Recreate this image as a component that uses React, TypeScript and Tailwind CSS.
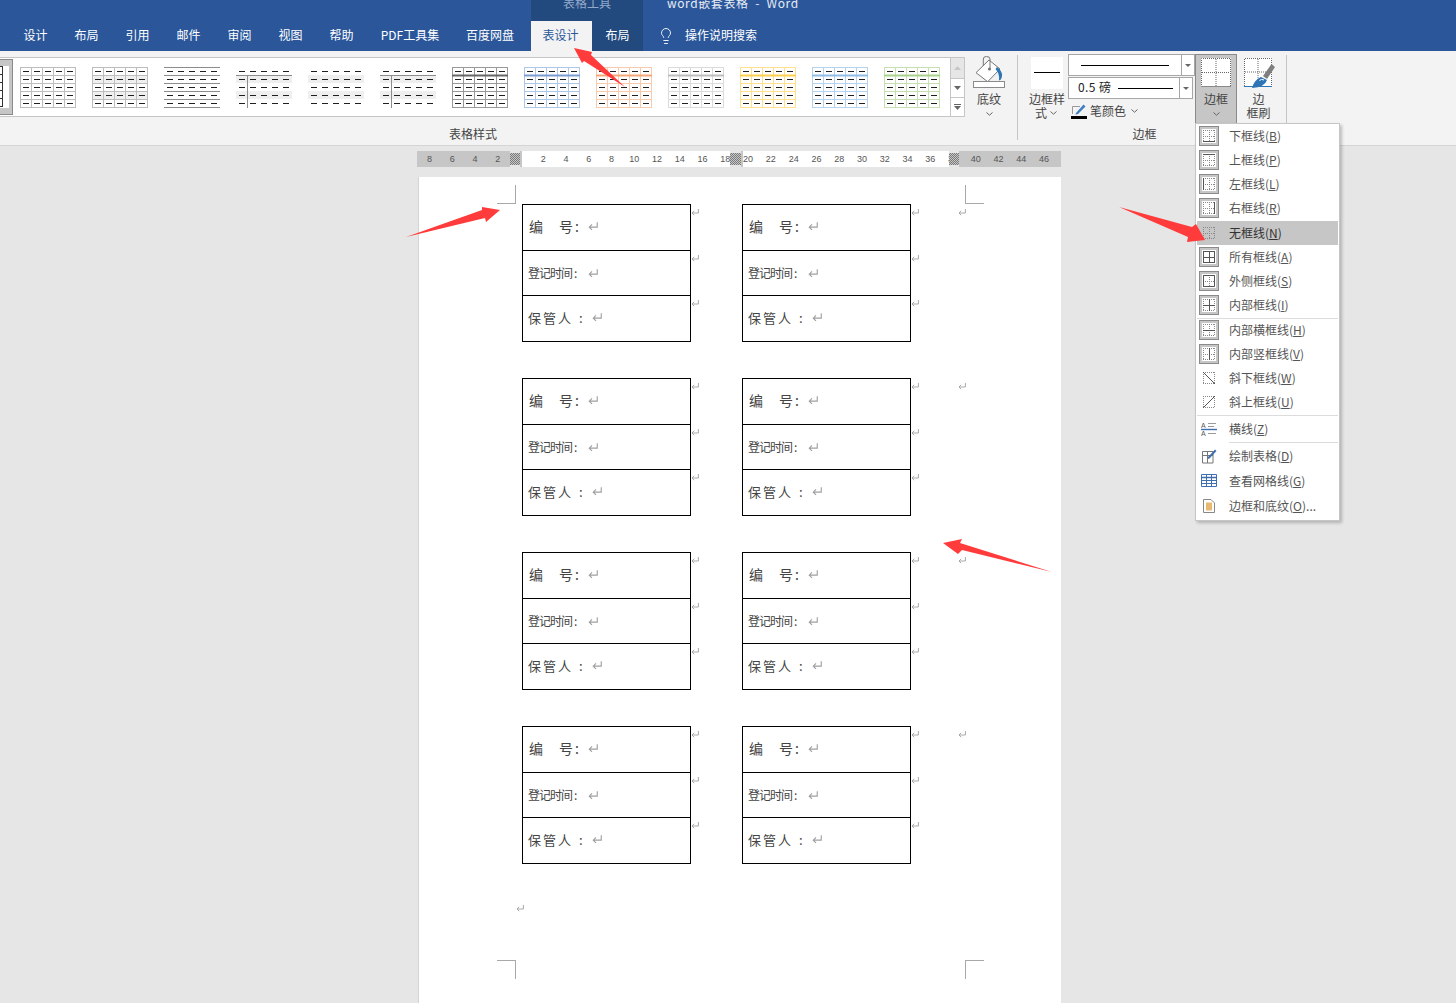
import React from "react";
import { Lightbulb } from "lucide-react";

const tabs = [
  { label: "设计", w: "w-[51px]" },
  { label: "布局", w: "w-[51px]" },
  { label: "引用", w: "w-[51px]" },
  { label: "邮件", w: "w-[51px]" },
  { label: "审阅", w: "w-[51px]" },
  { label: "视图", w: "w-[51px]" },
  { label: "帮助", w: "w-[51px]" },
  { label: "PDF工具集", w: "w-[86px]" },
  { label: "百度网盘", w: "w-[74px]" },
];

type ThumbProps = {
  line: string;
  head?: string;
  grid?: boolean;
  rules?: boolean;
  bands?: boolean;
  side?: boolean;
  topRule?: boolean;
};

const thumbs: ThumbProps[] = [
  { line: "#bdbdbd", grid: true },
  { line: "#bdbdbd", grid: true, bands: true },
  { line: "#8c8c8c", rules: true },
  { line: "#8c8c8c", side: true, bands: true, topRule: true },
  { line: "#8c8c8c", bands: true },
  { line: "#8c8c8c", side: true, bands: true, topRule: true },
  { line: "#999999", head: "#666666", grid: true },
  { line: "#aec6e8", head: "#7c9ccf", grid: true },
  { line: "#f8cbad", head: "#f4a877", grid: true },
  { line: "#dbdbdb", head: "#bdbdbd", grid: true },
  { line: "#ffe08f", head: "#ffcf4d", grid: true },
  { line: "#b4d3ef", head: "#8fbbe5", grid: true },
  { line: "#c6e0b4", head: "#a9d18e", grid: true },
];

function Thumb({ line, head, grid, rules, bands, side, topRule }: ThumbProps) {
  const xs = [0, 11, 22, 33, 44];
  const ys = [0, 8, 16, 24, 32];
  return (
    <svg width="56" height="41" className="shrink-0">
      {bands && <rect x="0" y="8" width="56" height="8" fill="#efefef" />}
      {bands && <rect x="0" y="24" width="56" height="8" fill="#efefef" />}
      {grid &&
        [0, 11, 22, 33, 44, 55].map((x) => (
          <line key={x} x1={x + 0.5} x2={x + 0.5} y1="0" y2="41" stroke={line} />
        ))}
      {(grid || rules) &&
        [0, 8, 16, 24, 32, 40].map((y) => (
          <line key={y} x1="0" x2="56" y1={y + 0.5} y2={y + 0.5} stroke={line} />
        ))}
      {head && <rect x="0" y="7.5" width="56" height="2" fill={head} />}
      {topRule && <line x1="0" x2="56" y1="8.5" y2="8.5" stroke={line} />}
      {side && <line x1="11.5" x2="11.5" y1="8" y2="41" stroke={line} />}
      {xs.map((x) =>
        ys.map((y) => (
          <rect key={`${x}-${y}`} x={x + 3} y={y + 4} width="6" height="1" fill="#1f1f1f" />
        ))
      )}
    </svg>
  );
}

function Chevron() {
  return (
    <svg width="7" height="4" viewBox="0 0 7 4" className="shrink-0">
      <path d="M0.5 0.5 L3.5 3.2 L6.5 0.5" fill="none" stroke="#666666" />
    </svg>
  );
}

function ReturnMark({ size = 7 }: { size?: number }) {
  return (
    <svg width={size + 1} height={size} viewBox="0 0 8 7" className="shrink-0">
      <path
        d="M7.4 0 V4 H1 M3.2 1.8 L1 4 L3.2 6.2"
        fill="none"
        stroke="#a0a0a0"
        strokeWidth="0.9"
      />
    </svg>
  );
}

// small dotted table used by the border menu
function BorderIcon({
  lines,
  boxed = true,
  outline = false,
}: {
  lines: string;
  boxed?: boolean;
  outline?: boolean;
}) {
  const dots = outline
    ? "M4 4.5 H16 M4 15.5 H16 M4.5 4 V16 M15.5 4 V16"
    : "M4 4.5 H16 M4 10.5 H16 M4 15.5 H16 M4.5 4 V16 M10.5 4 V16 M15.5 4 V16";
  return (
    <svg width="20" height="20" viewBox="0 0 20 20" className="shrink-0">
      {boxed && <rect x="0.5" y="0.5" width="19" height="19" fill="#c6c6c6" stroke="#8a8a8a" />}
      {boxed && <rect x="3" y="3" width="14" height="14" fill="#ffffff" />}
      <path d={dots} stroke="#888888" strokeDasharray="1 1" fill="none" />
      <path d={lines} stroke="#555555" fill="none" />
    </svg>
  );
}

const menuTop = [
  { label: "下框线", key: "B", lines: "M4 15.5 H16" },
  { label: "上框线", key: "P", lines: "M4 4.5 H16" },
  { label: "左框线", key: "L", lines: "M4.5 4 V16" },
  { label: "右框线", key: "R", lines: "M15.5 4 V16" },
];

const menuMiddle = [
  { label: "所有框线", key: "A", lines: "M4 4.5 H16 M4 10.5 H16 M4 15.5 H16 M4.5 4 V16 M10.5 4 V16 M15.5 4 V16" },
  { label: "外侧框线", key: "S", lines: "M4.5 4.5 H15.5 V15.5 H4.5 Z" },
  { label: "内部框线", key: "I", lines: "M4 10.5 H16 M10.5 4 V16" },
];

const menuInner = [
  { label: "内部横框线", key: "H", lines: "M4 10.5 H16", boxed: true },
  { label: "内部竖框线", key: "V", lines: "M10.5 4 V16", boxed: true },
  { label: "斜下框线", key: "W", lines: "M4 4 L16 16", boxed: false },
  { label: "斜上框线", key: "U", lines: "M4 16 L16 4", boxed: false },
];

function MenuItem({
  icon,
  label,
  hotkey,
  tail,
  active,
  tall,
}: {
  icon: React.ReactNode;
  label: string;
  hotkey: string;
  tail?: string;
  active?: boolean;
  tall?: boolean;
}) {
  return (
    <div
      className={`flex items-center text-[12px] ${tall ? "h-[25px]" : "h-[24px]"} ${
        active ? "mx-px bg-[#c6c6c6] pl-[2px] text-[#333333]" : "pl-[3px] text-[#555555]"
      }`}
    >
      <div className="flex w-[20px] justify-center">{icon}</div>
      <span className="ml-[10px] whitespace-pre">
        {label}(<span className="underline">{hotkey}</span>){tail}
      </span>
    </div>
  );
}

function MenuSep({ inset }: { inset?: boolean }) {
  return <div className={`mr-[1px] mt-px -mb-px h-px bg-[#dcdcdc] ${inset ? "ml-[33px]" : "ml-[1px]"}`} />;
}

function BorderMenu() {
  return (
    <div className="absolute left-[1195px] top-[123px] flex h-[398px] w-[145px] flex-col border border-[#c6c6c6] bg-white shadow-[2px_2px_3px_rgba(0,0,0,0.22)]">
      {menuTop.map((m) => (
        <MenuItem key={m.key} label={m.label} hotkey={m.key} icon={<BorderIcon lines={m.lines} />} />
      ))}
      <div className="mt-px">
        <MenuItem active label="无框线" hotkey="N" icon={<BorderIcon lines="" boxed={false} />} />
      </div>
      {menuMiddle.map((m) => (
        <MenuItem key={m.key} label={m.label} hotkey={m.key} icon={<BorderIcon lines={m.lines} />} />
      ))}
      <MenuSep />
      {menuInner.map((m) => (
        <MenuItem
          key={m.key}
          label={m.label}
          hotkey={m.key}
          icon={<BorderIcon lines={m.lines} boxed={m.boxed} outline={!m.boxed} />}
        />
      ))}
      <MenuSep />
      <div className="mt-px">
        <MenuItem
          tall
          label="横线"
          hotkey="Z"
          icon={
            <svg width="16" height="16" viewBox="0 0 16 16">
              <text x="0" y="6.5" fontSize="7" fill="#555555" fontFamily="Liberation Sans">A</text>
              <text x="0" y="15" fontSize="7" fill="#555555" fontFamily="Liberation Sans">A</text>
              <path d="M7 2.5 H15 M7 5.5 H13 M7 12.5 H15" stroke="#999999" fill="none" />
              <path d="M0 8.5 H16" stroke="#3f6fb0" strokeWidth="1.4" fill="none" />
            </svg>
          }
        />
      </div>
      <MenuSep inset />
      <div className="mt-px">
        <MenuItem
          tall
          label="绘制表格"
          hotkey="D"
          icon={
            <svg width="16" height="16" viewBox="0 0 16 16">
              <path d="M1.5 3.5 H12 V15 H1.5 Z M1.5 7.5 H12 M6.5 3.5 V15" stroke="#777777" fill="none" />
              <path d="M7 9 L14 1.5 L15.5 3 L8.5 10.5 L6.5 11 Z" fill="#3f6fb0" />
            </svg>
          }
        />
      </div>
      <MenuItem
        tall
        label="查看网格线"
        hotkey="G"
        icon={
          <svg width="16" height="13" viewBox="0 0 16 13">
            <path d="M0.5 0.5 H15.5 V12.5 H0.5 Z" stroke="#3f6fb0" fill="#ffffff" />
            <path d="M0.5 3.5 H15.5" stroke="#3f6fb0" strokeWidth="1.5" />
            <path d="M0.5 6.5 H15.5 M0.5 9.5 H15.5 M5.5 1 V12.5 M10.5 1 V12.5" stroke="#3f6fb0" />
          </svg>
        }
      />
      <MenuItem
        tall
        label="边框和底纹"
        hotkey="O"
        tail="..."
        icon={
          <svg width="12" height="14" viewBox="0 0 12 14">
            <path d="M0.5 0.5 H8 L11.5 4 V13.5 H0.5 Z" stroke="#888888" fill="#ffffff" />
            <rect x="3" y="3.5" width="6" height="8" fill="#e8b96f" />
          </svg>
        }
      />
    </div>
  );
}

function Cell({ className, children }: { className: string; children: React.ReactNode }) {
  return <div className={`flex items-center pl-[5px] text-[#444444] ${className}`}>{children}</div>;
}

function LabelTable() {
  return (
    <div className="flex">
      <div className="flex h-[138px] w-[169px] shrink-0 flex-col border border-black">
        <Cell className="h-[46px] border-b border-black pb-[2px] text-[14px]">
          <span className="ml-px">编</span>
          <span className="ml-[16px]">号</span>
          <span className="ml-[2px] mr-[9px]">:</span>
          <ReturnMark size={9} />
        </Cell>
        <Cell className="h-[45px] border-b border-black text-[12px]">
          <span className="tracking-[-1px]">登记时间</span>
          <span className="ml-[2px] mr-[11px]">:</span>
          <ReturnMark size={9} />
        </Cell>
        <Cell className="flex-1 pb-[2px] text-[13px]">
          <span className="tracking-[2px]">保管人</span>
          <span className="ml-[6px] mr-[9px]">:</span>
          <ReturnMark size={9} />
        </Cell>
      </div>
      <div className="flex w-[51px] flex-col pt-[5px]">
        <div className="h-[46px]"><ReturnMark /></div>
        <div className="h-[45px]"><ReturnMark /></div>
        <div><ReturnMark /></div>
      </div>
    </div>
  );
}

const rulerNumbers = [
  "8", "6", "4", "2", "", "2", "4", "6", "8", "10", "12", "14", "16", "18", "20", "22", "24", "26",
  "28", "30", "32", "34", "36", "38", "40", "42", "44", "46",
];

function RulerHatch({ className }: { className: string }) {
  return (
    <div
      className={`relative z-10 h-[12px] self-center bg-[repeating-conic-gradient(#7a7a7a_0_25%,#c6c6c6_0_50%)] bg-[length:2px_2px] ${className}`}
    />
  );
}

function Ruler() {
  return (
    <div className="relative ml-[417px] mt-[5px] h-[16px] w-[644px] shrink-0">
      <div className="flex h-full">
        <div className="w-[93px] bg-[#c6c6c6]" />
        <RulerHatch className="w-[10px]" />
        <div className="w-[2px] bg-[#c6c6c6]" />
        <div className="w-[208px] bg-white" />
        <RulerHatch className="w-[11px]" />
        <div className="w-[2px] bg-[#c6c6c6]" />
        <div className="w-[206px] bg-white" />
        <RulerHatch className="w-[10px]" />
        <div className="flex-1 bg-[#c6c6c6]" />
      </div>
      <div className="absolute inset-0 flex pl-[1px] font-['Liberation_Sans',sans-serif] text-[9px] leading-[16px] text-[#555555]">
        {rulerNumbers.map((n, i) => (
          <div key={i} className="w-[22.77px] shrink-0 text-center">
            {n}
          </div>
        ))}
      </div>
    </div>
  );
}

function ScrollCell({ className, children }: { className: string; children?: React.ReactNode }) {
  return <div className={`flex flex-col items-center justify-center gap-[1px] border-l border-r border-[#c6c6c6] ${className}`}>{children}</div>;
}

function Gallery() {
  return (
    <div className="flex h-[60px] w-[965px] shrink-0 border-y border-[#c6c6c6] bg-white">
      <div className="flex w-[950px] items-center">
        <div className="h-[56px] w-[13px] shrink-0 border border-l-0 border-[#8a8a8a] bg-[#c6c6c6] py-[6px] pr-[3px]">
          <div className="h-full w-[9px] overflow-hidden bg-white">
            <div className="-ml-[53px]">
              <Thumb line="#333333" grid />
            </div>
          </div>
        </div>
        <div className="ml-[7px] flex gap-[16px]">
          {thumbs.map((t, i) => (
            <Thumb key={i} {...t} />
          ))}
        </div>
      </div>
      <div className="flex w-[15px] flex-col">
        <ScrollCell className="h-[20px] bg-[#e6e6e6]">
          <svg width="7" height="4"><path d="M0 4 L3.5 0 L7 4 Z" fill="#c6c6c6" /></svg>
        </ScrollCell>
        <ScrollCell className="h-[19px] border-t">
          <svg width="7" height="4"><path d="M0 0 L3.5 4 L7 0 Z" fill="#666666" /></svg>
        </ScrollCell>
        <ScrollCell className="flex-1 border-t">
          <div className="h-px w-[7px] bg-[#666666]" />
          <svg width="7" height="4"><path d="M0 0 L3.5 4 L7 0 Z" fill="#666666" /></svg>
        </ScrollCell>
      </div>
    </div>
  );
}

function Ribbon() {
  return (
    <div className="flex h-[95px] shrink-0 items-start border-b border-[#d4d4d4] bg-[#f3f3f3] text-[12px] leading-[14px] text-[#444444]">
      {/* table styles */}
      <div className="flex w-[1017px] shrink-0 flex-col">
        <div className="flex h-[76px] pt-[6px]">
          <Gallery />
          <div className="-mt-[3px] flex w-[48px] flex-col items-center">
            <svg width="40" height="40" viewBox="0 0 40 40">
              <path d="M7 18.7 L20 6 L31 15 L18.7 27.7 Z" fill="#ffffff" stroke="#777777" />
              <path d="M14.3 12 V5 Q14.3 2.5 17.5 2.5 Q21 2.5 21 5 V14" fill="none" stroke="#777777" />
              <circle cx="20.5" cy="15" r="1.6" fill="#777777" />
              <path d="M28 13 Q33.5 17 33 22 Q32.5 26 30 26.5 Q31 20 26.5 15 Z" fill="#2e75b6" />
              <rect x="4.5" y="27.5" width="31" height="6" fill="#ffffff" stroke="#8a8a8a" />
            </svg>
            <span className="-mt-[2px]">底纹</span>
            <div className="mt-[6px]"><Chevron /></div>
          </div>
        </div>
        <div className="w-[946px] text-center">表格样式</div>
      </div>
      <div className="mt-[4px] h-[85px] w-px shrink-0 bg-[#c6c6c6]" />

      {/* borders */}
      <div className="flex w-[268px] shrink-0 flex-col">
        <div className="flex h-[76px] pl-[11px]">
          <div className="flex w-[39px] shrink-0 flex-col pt-[6px]">
            <div className="ml-[2px] h-[32px] w-[32px] bg-white px-[3px] pt-[15px]">
              <div className="h-px w-full bg-black" />
            </div>
            <div className="mt-[3px] w-[38px]">边框样</div>
            <div className="flex items-center gap-[3px] pl-[6px]">
              式 <Chevron />
            </div>
          </div>
          <div className="flex w-[127px] shrink-0 flex-col pt-[3px]">
            <div className="flex h-[22px] border border-[#a6a6a6] bg-white">
              <div className="flex flex-1 items-center px-[12px]">
                <div className="h-px w-full bg-black" />
              </div>
              <div className="flex w-[13px] items-center justify-center border-l border-[#a6a6a6]">
                <svg width="6" height="3"><path d="M0 0 L3 3 L6 0 Z" fill="#666666" /></svg>
              </div>
            </div>
            <div className="mt-px flex h-[22px] w-[125px] border border-[#a6a6a6] bg-white">
              <div className="flex flex-1 items-center pl-[9px] pr-[6px] text-[#222222]">
                <span className="whitespace-pre pb-[2px] tracking-[0.4px]">0.5 磅</span>
                <div className="ml-[7px] h-px flex-1 bg-black" />
              </div>
              <div className="flex w-[13px] items-center justify-center border-l border-[#a6a6a6]">
                <svg width="6" height="3"><path d="M0 0 L3 3 L6 0 Z" fill="#666666" /></svg>
              </div>
            </div>
            <div className="mt-[4px] flex items-center pl-[3px]">
              <svg width="16" height="16" viewBox="0 0 16 16">
                <path d="M1.5 11 V3.5 H9" fill="none" stroke="#999999" />
                <path d="M5 10 L12.5 1.5 L14.5 3.5 L7 11 L4.5 11.8 Z" fill="#3f7fc4" />
                <rect x="0" y="13" width="16" height="3" fill="#000000" />
              </svg>
              <span className="ml-[3px]">笔颜色</span>
              <div className="ml-[5px]"><Chevron /></div>
            </div>
          </div>
          <div className="relative mt-[3px] flex h-[70px] w-[42px] shrink-0 flex-col items-center border border-[#8a8a8a] bg-[#c6c6c6]">
            <svg width="30" height="30" viewBox="0 0 30 30" className="mt-[3px]">
              <rect width="30" height="29" fill="#ffffff" />
              <path d="M0.5 29 V0.5 H29.5 V29 M15 1 V28 M1 14.5 H29" fill="none" stroke="#666666" strokeDasharray="1 1" />
              <path d="M0 28.5 H30" stroke="#8a8a8a" />
            </svg>
            <span className="mt-[4px]">边框</span>
            <div className="mt-[6px]"><Chevron /></div>
          </div>
          <div className="mt-[3px] flex w-[43px] shrink-0 flex-col items-center">
            <svg width="32" height="32" viewBox="0 0 32 32" className="mt-[3px]">
              <rect x="1" y="1" width="28" height="28" fill="#ffffff" />
              <path d="M1.5 29 V1.5 H28.5 V29 M15 2 V28 M2 15 H28" fill="none" stroke="#666666" strokeDasharray="1 1" />
              <path d="M1 29.5 H29" stroke="#2e75b6" />
              <path d="M28.5 7 L32 10 L24 22 L20 19 Z" fill="#7f7f7f" />
              <path d="M9 31 Q11 23 18 20 L24 23 Q22 30 9 31 Z" fill="#2e75b6" />
              <path d="M16.5 23.5 Q18.5 21.5 21 23" fill="none" stroke="#ffffff" />
            </svg>
            <span className="mt-[3px]">边</span>
            <span>框刷</span>
          </div>
        </div>
        <div className="w-[253px] text-center">边框</div>
      </div>
      <div className="mt-[4px] h-[85px] w-px shrink-0 bg-[#c6c6c6]" />
    </div>
  );
}

function CropMark({ className }: { className: string }) {
  return <div className={`absolute h-[19px] w-[19px] border-[#a8a8a8] ${className}`} />;
}

function Arrows() {
  return (
    <svg className="pointer-events-none absolute left-0 top-0 z-20" width="1456" height="1003">
      <g fill="#ff3b3b">
        <polygon points="574,48 592,52 591,55 625,87 584,61 582,63" />
        <polygon points="406,237 482,210 482,207 500,210 486,222 485,218" />
        <polygon points="1119,207 1192,227 1196,224 1205,240 1187,242 1188,237" />
        <polygon points="943,543 962,539 960,543 1052,572 962,550 958,554" />
      </g>
    </svg>
  );
}

export default function App() {
  return (
    <div className="relative flex h-[1003px] w-[1456px] flex-col overflow-hidden bg-[#e6e6e6] font-['Noto_Sans_CJK_SC','Liberation_Sans',sans-serif]">
      {/* title bar and tabs */}
      <div className="flex h-[51px] shrink-0 flex-col bg-[#2b579a] text-white">
        <div className="flex h-[21px] text-[12px] leading-[14px]">
          <div className="w-[531px]" />
          <div className="w-[112px] bg-[#234a7e] text-center text-[#93a9cc]">
            <div className="-mt-[4px]">表格工具</div>
          </div>
          <div className="-mt-[4px] ml-[24px] whitespace-pre text-[12px] tracking-[0.6px] text-[#e6ecf5]">
            word嵌套表格  -  Word
          </div>
        </div>
        <div className="flex h-[30px] text-[12px]">
          <div className="flex pl-[10px]">
            {tabs.map((t, i) => (
              <div key={i} className={`flex items-center justify-center pb-[3px] ${t.w}`}>
                {t.label}
              </div>
            ))}
          </div>
          <div className="ml-[4px] flex w-[112px] bg-[#234a7e]">
            <div className="flex w-[61px] items-center justify-center bg-[#f3f3f3] pb-[3px] pr-[2px] text-[#2b579a]">
              表设计
            </div>
            <div className="flex w-[51px] items-center justify-center pb-[3px]">布局</div>
          </div>
          <div className="ml-[14px] flex items-center pb-[1px]">
            <Lightbulb size={18} strokeWidth={1.2} />
            <span className="ml-[10px] pb-[2px]">操作说明搜索</span>
          </div>
        </div>
      </div>

      <Ribbon />
      <Ruler />

      {/* page */}
      <div className="relative ml-[418px] mt-[10px] w-[643px] flex-1 border-l border-[#d4d4d4] bg-white pl-[103px] pt-[27px]">
        <CropMark className="left-[78px] top-[8px] border-b border-r" />
        <CropMark className="left-[546px] top-[8px] border-l border-b" />
        <CropMark className="left-[78px] top-[783px] border-r border-t" />
        <CropMark className="left-[546px] top-[783px] border-l border-t" />
        <div className="flex flex-col gap-[36px]">
          {[0, 1, 2, 3].map((row) => (
            <div key={row} className="flex">
              <LabelTable />
              <LabelTable />
              <div className="-ml-[4px] pt-[5px]"><ReturnMark /></div>
            </div>
          ))}
        </div>
        <div className="-ml-[6px] mt-[41px]"><ReturnMark /></div>
      </div>

      <BorderMenu />
      <Arrows />
    </div>
  );
}
